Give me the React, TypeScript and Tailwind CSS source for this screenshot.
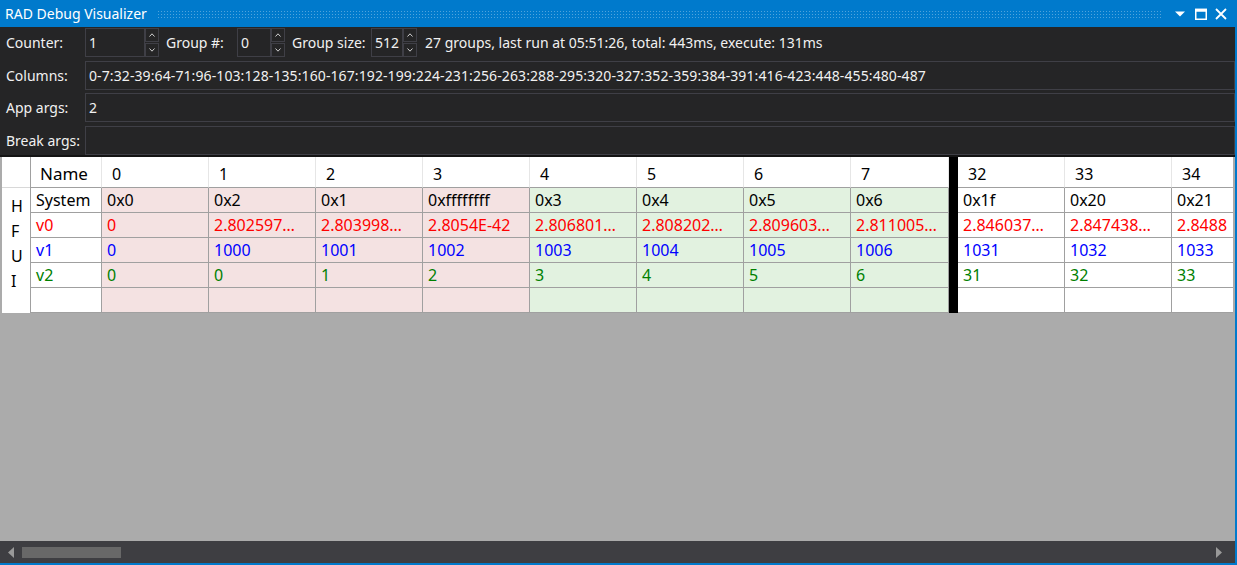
import React from "react";

type Col = { head: string; sys: string; v0: string; v1: string; v2: string; tint: string; w: string };

const PINK = "bg-[#f4e2e2]";
const GREEN = "bg-[#e2f2e0]";
const PLAIN = "bg-white";

const COLUMNS: Col[] = [
  { head: "0", sys: "0x0", v0: "0", v1: "0", v2: "0", tint: PINK, w: "w-[107px]" },
  { head: "1", sys: "0x2", v0: "2.802597…", v1: "1000", v2: "0", tint: PINK, w: "w-[107px]" },
  { head: "2", sys: "0x1", v0: "2.803998…", v1: "1001", v2: "1", tint: PINK, w: "w-[107px]" },
  { head: "3", sys: "0xffffffff", v0: "2.8054E-42", v1: "1002", v2: "2", tint: PINK, w: "w-[107px]" },
  { head: "4", sys: "0x3", v0: "2.806801…", v1: "1003", v2: "3", tint: GREEN, w: "w-[107px]" },
  { head: "5", sys: "0x4", v0: "2.808202…", v1: "1004", v2: "4", tint: GREEN, w: "w-[107px]" },
  { head: "6", sys: "0x5", v0: "2.809603…", v1: "1005", v2: "5", tint: GREEN, w: "w-[107px]" },
  { head: "7", sys: "0x6", v0: "2.811005…", v1: "1006", v2: "6", tint: GREEN, w: "w-[98px]" },
];

const MORE: Col[] = [
  { head: "32", sys: "0x1f", v0: "2.846037…", v1: "1031", v2: "31", tint: PLAIN, w: "w-[107px]" },
  { head: "33", sys: "0x20", v0: "2.847438…", v1: "1032", v2: "32", tint: PLAIN, w: "w-[107px]" },
  { head: "34", sys: "0x21", v0: "2.8488", v1: "1033", v2: "33", tint: PLAIN, w: "w-[107px]" },
];

function Spinner() {
  return (
    <div className="flex h-[29px] w-[14px] shrink-0 flex-col justify-between">
      <div className="flex h-[14px] items-center justify-center border border-[#3f3f46]">
        <svg width="6" height="4" viewBox="0 0 6 4" className="text-[#d0d0d0]">
          <path d="M0.5 3.5 L3 0.8 L5.5 3.5" fill="none" stroke="currentColor" strokeWidth="1" />
        </svg>
      </div>
      <div className="flex h-[14px] items-center justify-center border border-[#3f3f46]">
        <svg width="6" height="4" viewBox="0 0 6 4" className="text-[#d0d0d0]">
          <path d="M0.5 0.5 L3 3.2 L5.5 0.5" fill="none" stroke="currentColor" strokeWidth="1" />
        </svg>
      </div>
    </div>
  );
}

function Field({ value, w }: { value: string; w: string }) {
  return (
    <div className={`flex h-[29px] shrink-0 items-center border border-[#3f3f46] pl-[3px] ${w}`}>
      {value}
    </div>
  );
}

function ArgRow({ label, value, gap }: { label: string; value: string; gap: string }) {
  return (
    <div className={`flex h-[29px] items-center ${gap}`}>
      <div className="w-[85px] shrink-0 pl-[6px]">{label}</div>
      <div className="flex h-full flex-1 items-center overflow-hidden whitespace-nowrap border border-[#3f3f46] pl-[3px] tracking-[0.1px]">
        {value}
      </div>
    </div>
  );
}

function DataColumn({ c }: { c: Col }) {
  const cell = `flex h-[25px] items-center overflow-hidden whitespace-nowrap border-b border-r border-[#a0a0a0] pl-[5px] ${c.tint}`;
  return (
    <div className={`flex shrink-0 flex-col ${c.w}`}>
      <div className="flex h-[31px] items-end border-b border-r border-b-[#a0a0a0] border-r-[#e6e6e6] bg-white pb-[1px] pl-[10px] text-[16px]">
        {c.head}
      </div>
      <div className={`${cell} text-black`}>{c.sys}</div>
      <div className={`${cell} text-[#ff0000]`}>{c.v0}</div>
      <div className={`${cell} text-[#0000ff]`}>{c.v1}</div>
      <div className={`${cell} text-[#008000]`}>{c.v2}</div>
      <div className={cell}></div>
    </div>
  );
}

export default function App() {
  const columnsSpec =
    "0-7:32-39:64-71:96-103:128-135:160-167:192-199:224-231:256-263:288-295:320-327:352-359:384-391:416-423:448-455:480-487";

  return (
    <div className="flex h-[565px] w-[1237px] flex-col overflow-hidden bg-[#007acc] font-['Noto_Sans',sans-serif]">
      {/* Title bar */}
      <div className="flex h-[27px] shrink-0 items-center pl-[5px] pr-[10px] text-white">
        <span className="text-[14px]">RAD Debug Visualizer</span>
        <div className="ml-[10px] mr-[10px] h-[8px] flex-1 bg-[radial-gradient(circle,#4fa3dc_0.8px,transparent_1px)] bg-[length:3px_3px]" />
        <svg width="12" height="8" viewBox="0 0 12 8" className="ml-[2px]">
          <path d="M1 1.5 H11 L6 6.5 Z" fill="white" />
        </svg>
        <svg width="12" height="12" viewBox="0 0 12 12" className="ml-[9px]">
          <rect x="0.75" y="1.5" width="10.5" height="9.75" fill="none" stroke="white" strokeWidth="1.5" />
          <rect x="0" y="0.75" width="12" height="3" fill="white" />
        </svg>
        <svg width="12" height="12" viewBox="0 0 12 12" className="ml-[8px]">
          <path d="M1 1 L11 11 M11 1 L1 11" stroke="white" strokeWidth="1.8" />
        </svg>
      </div>

      {/* Body */}
      <div className="mb-[2px] mr-[2px] flex flex-1 flex-col bg-[#252526] text-[14px] text-[#f1f1f1]">
        <div className="mt-[1px] flex h-[29px] items-center">
          <div className="w-[85px] shrink-0 pl-[6px]">Counter:</div>
          <Field value="1" w="w-[60px]" />
          <Spinner />
          <div className="ml-[7px] w-[71px] shrink-0">Group #:</div>
          <Field value="0" w="w-[34px]" />
          <Spinner />
          <div className="ml-[7px] w-[79px] shrink-0">Group size:</div>
          <Field value="512" w="w-[32px]" />
          <Spinner />
          <div className="ml-[8px] whitespace-nowrap">27 groups, last run at 05:51:26, total: 443ms, execute: 131ms</div>
        </div>
        <ArgRow label="Columns:" value={columnsSpec} gap="mt-[4px]" />
        <ArgRow label="App args:" value="2" gap="mt-[3px]" />
        <ArgRow label="Break args:" value="" gap="mt-[4px]" />

        {/* Grid + empty area */}
        <div className="flex flex-1 flex-col border-t-2 border-[#141414] bg-[#ababab] px-[2px]">
          <div className="flex h-[156px] shrink-0 overflow-hidden bg-white text-[16px] text-black">
            {/* row header letters */}
            <div className="flex w-[29px] shrink-0 flex-col border-r border-[#a0a0a0]">
              <div className="h-[31px] border-b border-[#d8d8d8]" />
              {["H", "F", "U", "I", ""].map((l, i) => (
                <div key={i} className="flex h-[25px] items-end pl-[9px] leading-[20px]">
                  <span className="translate-y-[3px]">{l}</span>
                </div>
              ))}
            </div>
            {/* Name column */}
            <div className="flex w-[71px] shrink-0 flex-col">
              <div className="flex h-[31px] items-end border-b border-r border-b-[#a0a0a0] border-r-[#e6e6e6] pb-[1px] pl-[9px] text-[17px]">
                Name
              </div>
              <div className="flex h-[25px] items-center border-b border-r border-[#a0a0a0] pl-[5px]">System</div>
              <div className="flex h-[25px] items-center border-b border-r border-[#a0a0a0] pl-[5px] text-[#ff0000]">v0</div>
              <div className="flex h-[25px] items-center border-b border-r border-[#a0a0a0] pl-[5px] text-[#0000ff]">v1</div>
              <div className="flex h-[25px] items-center border-b border-r border-[#a0a0a0] pl-[5px] text-[#008000]">v2</div>
              <div className="h-[25px] border-b border-r border-[#a0a0a0]" />
            </div>
            {COLUMNS.map((c) => (
              <DataColumn key={c.head} c={c} />
            ))}
            <div className="w-[9px] shrink-0 bg-black" />
            {MORE.map((c) => (
              <DataColumn key={c.head} c={c} />
            ))}
          </div>
          <div className="flex-1" />
        </div>

        {/* Horizontal scrollbar */}
        <div className="flex h-[22px] shrink-0 items-center bg-[#3e3e42] px-[8px]">
          <svg width="6" height="11" viewBox="0 0 6 11">
            <path d="M6 0 V11 L0 5.5 Z" fill="#999999" />
          </svg>
          <div className="ml-[8px] h-[11px] w-[99px] bg-[#686868]" />
          <div className="flex-1" />
          <svg width="6" height="11" viewBox="0 0 6 11" className="mr-[5px]">
            <path d="M0 0 V11 L6 5.5 Z" fill="#999999" />
          </svg>
        </div>
      </div>
    </div>
  );
}
